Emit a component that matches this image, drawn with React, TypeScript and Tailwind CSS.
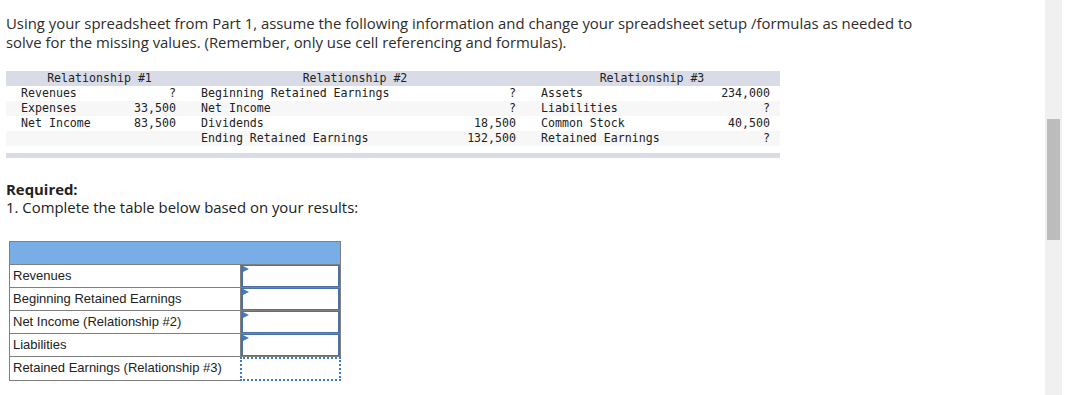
import React from 'react';

type SheetRow = [string, string, string, string, string, string];

const sheetRows: SheetRow[] = [
  ['Revenues', '?', 'Beginning Retained Earnings', '?', 'Assets', '234,000'],
  ['Expenses', '33,500', 'Net Income', '?', 'Liabilities', '?'],
  ['Net Income', '83,500', 'Dividends', '18,500', 'Common Stock', '40,500'],
  ['', '', 'Ending Retained Earnings', '132,500', 'Retained Earnings', '?'],
];

const answerRows = [
  'Revenues',
  'Beginning Retained Earnings',
  'Net Income (Relationship #2)',
  'Liabilities',
];

const mono = { fontFamily: '"DejaVu Sans Mono", "Liberation Mono", monospace' };
const body = { fontFamily: '"Open Sans", Lato, sans-serif' };

function SheetBlock() {
  return (
    <div className="w-[774px] text-[11.6px] leading-[15px] text-[#222]" style={mono}>
      <div className="grid grid-cols-[182px_340px_252px] h-[15px] bg-[#d9dce6]">
        <div className="text-center pl-[5px]">Relationship #1</div>
        <div className="text-center pr-[6px]">Relationship #2</div>
        <div className="text-center pr-[4px]">Relationship #3</div>
      </div>
      {sheetRows.map((r, i) => (
        <div
          key={i}
          className={`grid grid-cols-[182px_340px_252px] h-[15px] ${i % 2 === 1 ? 'bg-[#f7f7f7]' : 'bg-white'}`}
        >
          <div className="flex justify-between pl-[15px] pr-[12px]">
            <span>{r[0]}</span>
            <span>{r[1]}</span>
          </div>
          <div className="flex justify-between pl-[13px] pr-[12px]">
            <span>{r[2]}</span>
            <span>{r[3]}</span>
          </div>
          <div className="flex justify-between pl-[13px] pr-[10px]">
            <span>{r[4]}</span>
            <span>{r[5]}</span>
          </div>
        </div>
      ))}
      <div className="h-[7px]" />
      <div className="h-[5px] bg-[#d9dce6]" />
    </div>
  );
}

function InputCell() {
  return (
    <div className="relative w-[100px] h-[23px] border-r border-b border-[#808080]">
      <div className="h-[22px] border-2 border-[#4a72a8] border-t border-b-[1.5px]" />
      <div className="absolute left-[2px] top-[1px] w-0 h-0 border-l-[6px] border-l-[#3f7bc6] border-y-[3.5px] border-y-transparent" />
    </div>
  );
}

function AnswerTable() {
  return (
    <div className="w-[332px] text-[13px] text-[#222]" style={{ fontFamily: '"Liberation Sans", Arial, sans-serif' }}>
      <div className="h-[24px] bg-[#79ade5] border border-[#808080]" />
      {answerRows.map((label) => (
        <div key={label} className="flex">
          <div className="w-[232px] h-[23px] border-l border-r border-b border-[#808080] pl-[3px] leading-[22px]">
            {label}
          </div>
          <InputCell />
        </div>
      ))}
      <div className="flex">
        <div className="w-[231px] h-[24px] border-l border-b border-[#808080] pl-[3px] leading-[22px]">
          Retained Earnings (Relationship #3)
        </div>
        <div className="w-[101px] h-[24px] border-2 border-dotted border-[#3d7cc9]" />
      </div>
    </div>
  );
}

export default function App() {
  return (
    <div className="flex w-[1079px] h-[395px] bg-white overflow-hidden">
      <div className="flex-1 pl-[6px] pt-[14px]">
        <p className="text-[14.9px] leading-[19px] text-[#2d2d2d] w-[915px]" style={body}>
          Using your spreadsheet from Part 1, assume the following information and change your spreadsheet setup
          /formulas as needed to solve for the missing values. (Remember, only use cell referencing and formulas).
        </p>
        <div className="mt-[19px]">
          <SheetBlock />
        </div>
        <div className="mt-[22px] text-[14.9px] leading-[18px] text-[#222]" style={body}>
          <div className="font-bold">Required:</div>
          <div>1. Complete the table below based on your results:</div>
        </div>
        <div className="mt-[25px] ml-[3px]">
          <AnswerTable />
        </div>
      </div>
      <div className="w-[17px] h-full bg-[#f0f0f0] flex justify-center">
        <div className="mt-[119px] w-[13px] h-[121px] bg-[#bcbcbc]" />
      </div>
      <div className="w-[17px]" />
    </div>
  );
}
